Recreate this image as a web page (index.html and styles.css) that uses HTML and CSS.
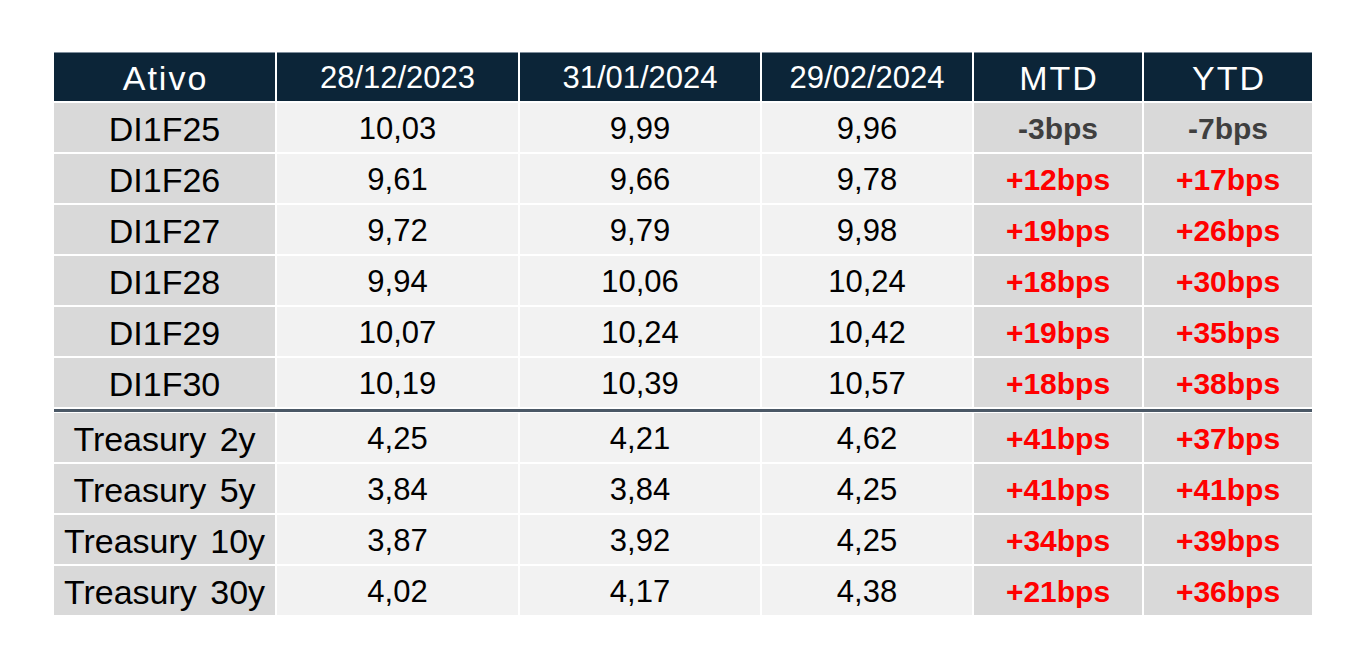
FILE: index.html
```html
<!DOCTYPE html>
<html lang="pt">
<head>
<meta charset="utf-8">
<title>Curvas</title>
<link rel="stylesheet" href="styles.css">
</head>
<body>
<div class="page">
  <div class="grid">
    <div class="h wide">Ativo</div>
    <div class="h">28/12/2023</div>
    <div class="h">31/01/2024</div>
    <div class="h">29/02/2024</div>
    <div class="h wide">MTD</div>
    <div class="h wide">YTD</div>

    <div class="c lab">DI1F25</div><div class="c num">10,03</div><div class="c num">9,99</div><div class="c num">9,96</div><div class="c bps neg">-3bps</div><div class="c bps neg">-7bps</div>
    <div class="c lab">DI1F26</div><div class="c num">9,61</div><div class="c num">9,66</div><div class="c num">9,78</div><div class="c bps">+12bps</div><div class="c bps">+17bps</div>
    <div class="c lab">DI1F27</div><div class="c num">9,72</div><div class="c num">9,79</div><div class="c num">9,98</div><div class="c bps">+19bps</div><div class="c bps">+26bps</div>
    <div class="c lab">DI1F28</div><div class="c num">9,94</div><div class="c num">10,06</div><div class="c num">10,24</div><div class="c bps">+18bps</div><div class="c bps">+30bps</div>
    <div class="c lab">DI1F29</div><div class="c num">10,07</div><div class="c num">10,24</div><div class="c num">10,42</div><div class="c bps">+19bps</div><div class="c bps">+35bps</div>
    <div class="c lab">DI1F30</div><div class="c num">10,19</div><div class="c num">10,39</div><div class="c num">10,57</div><div class="c bps">+18bps</div><div class="c bps">+38bps</div>

    <div class="sep"></div>

    <div class="c lab">Treasury 2y</div><div class="c num">4,25</div><div class="c num">4,21</div><div class="c num">4,62</div><div class="c bps">+41bps</div><div class="c bps">+37bps</div>
    <div class="c lab">Treasury 5y</div><div class="c num">3,84</div><div class="c num">3,84</div><div class="c num">4,25</div><div class="c bps">+41bps</div><div class="c bps">+41bps</div>
    <div class="c lab">Treasury 10y</div><div class="c num">3,87</div><div class="c num">3,92</div><div class="c num">4,25</div><div class="c bps">+34bps</div><div class="c bps">+39bps</div>
    <div class="c lab">Treasury 30y</div><div class="c num">4,02</div><div class="c num">4,17</div><div class="c num">4,38</div><div class="c bps">+21bps</div><div class="c bps">+36bps</div>
  </div>
</div>
</body>
</html>
```

FILE: styles.css
```css
html, body {
  margin: 0;
  padding: 0;
  background: #ffffff;
}

.page {
  padding: 52px 0 0 54px;
  font-family: "Liberation Sans", Arial, sans-serif;
}

.grid {
  display: grid;
  grid-template-columns: 221px 241px 240px 210px 168px 168px;
  grid-template-rows: repeat(7, 49px) 2px repeat(4, 49px);
  column-gap: 2px;
  row-gap: 2px;
  width: max-content;
}

.h, .c {
  display: flex;
  align-items: center;
  justify-content: center;
  box-sizing: border-box;
  padding-top: 3px;
  white-space: nowrap;
}

.h {
  background: #0c2538;
  border-top: 1px solid #7f8e9c;
  color: #ffffff;
  font-size: 31px;
  padding-top: 2px;
}

.h.wide {
  font-size: 34px;
  letter-spacing: 2px;
  padding-left: 2px;
}

.c {
  color: #000000;
}

.lab {
  background: #d9d9d9;
  font-size: 34px;
  word-spacing: 4px;
}

.num {
  background: #f2f2f2;
  font-size: 31px;
}

.bps {
  background: #d9d9d9;
  color: #ff0000;
  font-size: 30px;
  font-weight: bold;
}

.bps.neg {
  color: #3f3f3f;
}

.sep {
  grid-column: 1 / -1;
  height: 3px;
  margin-bottom: -1px;
  background: #4b5866;
}
```
